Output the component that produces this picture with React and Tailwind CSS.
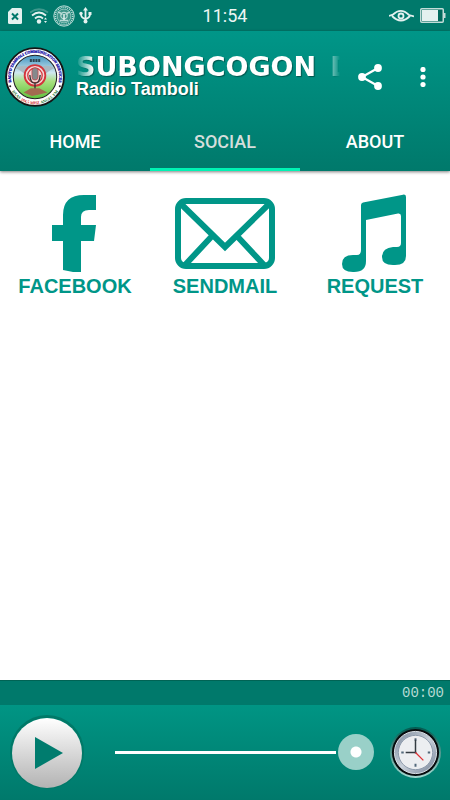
import React from 'react';

const PETAL = '#009688';

function Seal() {
  return (
    <svg viewBox="0 0 60 60" className="h-full w-full" role="img" aria-label="Radio Tamboli seal">
      <defs>
        <path id="seal-top" d="M9.500 41.500 A23.500 23.500 0 1 1 50.500 41.500" />
        <path id="seal-bottom" d="M5.500 40 A26.500 26.500 0 0 0 54.500 40" />
        <linearGradient id="seal-sky" x1="0" y1="0" x2="0" y2="1">
          <stop offset="0" stopColor="#3f93c0" />
          <stop offset=".4" stopColor="#cfe8f0" />
          <stop offset=".6" stopColor="#a8e080" />
          <stop offset="1" stopColor="#5fc23c" />
        </linearGradient>
      </defs>
      <circle cx="30" cy="30" r="28" fill="#fff" stroke="#151515" strokeWidth="1.800" />
      <circle cx="30" cy="30" r="21" fill="url(#seal-sky)" stroke="#222" strokeWidth="1" />
      <text fontFamily="Liberation Serif, serif" fontWeight="700" fontSize="3.6" fill="#2015a8" stroke="#2015a8" strokeWidth=".3">
        <textPath href="#seal-top" startOffset="50%" textAnchor="middle">RADYO TAMBOLI COMMUNICATION SERVICES</textPath>
      </text>
      <text fontFamily="Liberation Serif, serif" fontWeight="700" fontSize="4" fill="#16752c">
        <textPath href="#seal-bottom" startOffset="50%" textAnchor="middle">
          DXAS <tspan fill="#d11c24">104.5 MHZ</tspan> ANGEL FM
        </textPath>
      </text>
      <circle cx="6" cy="39" r="1" fill="#222" />
      <circle cx="54" cy="39" r="1" fill="#222" />
      <path d="M11 21 Q21 17 28 22 L25 34 Q21 26 11 21 M49 21 Q39 17 32 22 L35 34 Q39 26 49 21" fill="#aab9c2" />
      <path d="M25 14 H35" stroke="#2c4652" strokeWidth="3" strokeDasharray="2 .700" />
      <circle cx="30" cy="28.500" r="10" fill="#f3d9d8" stroke="#d3343b" strokeWidth="1.800" />
      <circle cx="30" cy="28.500" r="7" fill="none" stroke="#d3343b" strokeWidth="1.200" />
      <rect x="27" y="21" width="6" height="12" rx="3" fill="#85898c" stroke="#d3343b" strokeWidth=".6" />
      <path d="M25 28 Q25.500 36 30 36 Q34.500 36 35 28 M30 36 V43" fill="none" stroke="#333" strokeWidth="1.300" />
      <path d="M19 45 L26 41 L34 41 L42 45 L34 47 L27 48.500 Z" fill="#a36b50" />
    </svg>
  );
}

function MonoSeal() {
  return (
    <svg viewBox="0 0 22 22" className="size-[22px]" aria-hidden="true" fill="none" stroke="#b9dbd6">
      <circle cx="11" cy="11" r="10.200" />
      <circle cx="11" cy="11" r="8.700" strokeWidth="1.600" strokeDasharray="1.200 .800" />
      <circle cx="11" cy="11" r="7" fill="#3d9589" strokeWidth=".8" />
      <path d="M5 7.500 Q8 7 9 10 M17 7.500 Q14 7 13 10 M7 15.500 H15" strokeWidth="1.400" />
      <circle cx="11" cy="10.500" r="3.200" strokeWidth="1.200" />
      <path d="M11 9 V15" stroke="#e4f1ef" strokeWidth="1.500" />
    </svg>
  );
}

function StatusBar() {
  return (
    <div className="relative flex h-[31px] items-center justify-between bg-[#00796b] px-2">
      <div className="flex items-center gap-2">
        <svg viewBox="0 0 14 16" className="h-4 w-3.5" aria-hidden="true">
          <path d="M4 0 H12.500 Q14 0 14 1.500 V14.500 Q14 16 12.500 16 H1.500 Q0 16 0 14.500 V4 Z" fill="#e4f1ef" />
          <path d="M4 5.500 L10 11.500 M10 5.500 L4 11.500" stroke="#00796b" strokeWidth="2" />
        </svg>
        <div className="flex items-center gap-1">
          <svg viewBox="0 0 19 16" className="h-4 w-[19px]" aria-hidden="true" fill="none" strokeWidth="1.800">
            <path d="M0 4.500 Q9 -2 18 4.500" stroke="#3f988d" />
            <path d="M2 7.500 Q9 1.500 16 7.500 M5 10.500 Q9 7 13 10.500" stroke="#e4f1ef" />
            <circle cx="9" cy="13.500" r="2.200" fill="#e4f1ef" />
            <path d="M14 11.500 L15.500 9.500 L17 11.500 Z M14 13 H17 L15.500 15 Z" fill="#e4f1ef" />
          </svg>
          <MonoSeal />
          <svg viewBox="0 0 13 17" className="h-[17px] w-[13px]" aria-hidden="true">
            <path d="M6.500 14 V2 M6.500 12 Q2 11 2 7 M6.500 12 Q11 11 11 7" fill="none" stroke="#e4f1ef" strokeWidth="1.800" />
            <path d="M6.500 0 L9 3.500 H4 Z M9.500 5 H12.500 V8 H9.500 Z" fill="#e4f1ef" />
            <circle cx="2" cy="6.500" r="1.700" fill="#e4f1ef" />
            <circle cx="6.500" cy="14.500" r="2" fill="#e4f1ef" />
          </svg>
        </div>
      </div>
      <time className="absolute inset-x-0 text-center text-lg leading-8 text-[#edf6f4]">11:54</time>
      <div className="-mr-1 flex items-center gap-1.5">
        <svg viewBox="0 0 25 14" className="h-3.5 w-[25px]" aria-hidden="true" fill="none" stroke="#e4f1ef">
          <path d="M0 7 L4 5.500 Q12 -2 20 6 L25 7.500 M3 7 Q12 16 21 7" strokeWidth="1.800" />
          <circle cx="12" cy="7" r="2.500" strokeWidth="1.800" />
        </svg>
        <svg viewBox="0 0 26 15" className="h-[15px] w-[26px]" aria-hidden="true">
          <rect x=".75" y=".75" width="22.500" height="13.500" rx="1" fill="#00695c" stroke="#c3ddd9" strokeWidth="1.500" />
          <rect x="2" y="2" width="16" height="11" fill="#e4f1ef" />
          <path d="M24 5 H25.500 V10 H24 Z" fill="#c3ddd9" />
        </svg>
      </div>
    </div>
  );
}

function Header() {
  return (
    <header className="relative bg-linear-to-b from-[#009688] to-[#00796b] shadow-[0_1px_3px_rgba(0,0,0,0.5)]">
      <div className="flex h-[91px] items-center pl-1">
        <div className="size-[62px] shrink-0"><Seal /></div>
        <div className="ml-2.5 min-w-0 flex-1 text-white [text-shadow:1px_1px_1px_rgba(0,0,0,0.4)]">
          <h1 className="flex gap-3.5 overflow-hidden font-['DejaVu_Sans'] text-[27px] leading-6 font-bold whitespace-nowrap [mask-image:linear-gradient(to_right,transparent,black_18px,black_calc(100%-18px),transparent)]">
            <span>SUBONGCOGON</span>
            <span aria-hidden="true">D</span>
          </h1>
          <p className="font-['Liberation_Sans'] text-lg leading-5 font-bold">Radio Tamboli</p>
        </div>
        <button type="button" aria-label="Share" className="ml-4 p-0.5">
          <svg viewBox="0 0 24 26" className="h-[26px] w-6" fill="#fff">
            <path d="M20 4 L4 13 L20 22" fill="none" stroke="#fff" strokeWidth="2.200" />
            <circle cx="20" cy="4" r="3.900" /><circle cx="4" cy="13" r="3.900" /><circle cx="20" cy="22" r="3.900" />
          </svg>
        </button>
        <button type="button" aria-label="More options" className="mr-4 ml-7 p-2">
          <svg viewBox="0 0 6 20" className="h-5 w-1.5" fill="#fff">
            <circle cx="3" cy="2.500" r="2.600" /><circle cx="3" cy="10" r="2.600" /><circle cx="3" cy="17.500" r="2.600" />
          </svg>
        </button>
      </div>
      <nav role="tablist" className="grid h-[49px] grid-cols-3 text-lg font-medium text-white">
        <button type="button" role="tab" aria-selected="false" className="pb-2.5">HOME</button>
        <button type="button" role="tab" aria-selected="true" className="border-b-3 border-[#00f2b4] pb-[7px] text-[#d5dedc]">SOCIAL</button>
        <button type="button" role="tab" aria-selected="false" className="pb-2.5">ABOUT</button>
      </nav>
    </header>
  );
}

const links = [
  {
    label: 'FACEBOOK',
    art: <path d="M44 1 V16 H37 Q29 16 29 23 V31 H44 L42 47 H29 V78 H21 L11 76 V47 H0 V31 H11 V21 Q11 1 32 1 Z" fill={PETAL} />,
    box: '0 0 46 78',
    size: 'h-[78px] w-[46px]',
  },
  {
    label: 'SENDMAIL',
    art: (
      <g fill="none" stroke={PETAL} strokeWidth="6">
        <rect x="3" y="7" width="94" height="65" rx="8" />
        <path d="M6 10 L50 53 L94 10 M10 71 L38 41 M89 71 L61 41" />
      </g>
    ),
    box: '0 0 100 78',
    size: 'h-[78px] w-[100px]',
  },
  {
    label: 'REQUEST',
    art: <path d="M19 11 Q19 9 21 8.500 L61 .7 Q64 .2 64 3 V62 Q64 71 53 71 H51 Q40 71 40 63 Q40 54 51 53 H55 Q59 53 59 49 V22 Q59 19 56 19.500 L24 26 V67 Q24 78 12 78 H11 Q0 78 0 70 Q0 61 11 61 H15 Q19 61 19 56 Z" fill={PETAL} />,
    box: '0 0 66 78',
    size: 'h-[78px] w-[66px]',
  },
];

function Player() {
  return (
    <footer>
      <div className="flex h-[25px] items-center justify-end border-t border-[#006354] bg-[#00796b] pr-1.5">
        <time className="font-['Liberation_Mono'] text-sm text-[#b5d9d3]">00:00</time>
      </div>
      <div className="flex h-[95px] items-center bg-linear-to-b from-[#009584] to-[#00796b] pl-3">
        <button type="button" aria-label="Play" className="flex size-[70px] shrink-0 items-center justify-center rounded-full bg-linear-to-b from-white to-[#b3b3b3] shadow-[0_-1px_0_2px_#007968]">
          <svg viewBox="0 0 28 32" className="ml-1 h-8 w-7"><path d="M0 0 L28 16 L0 32 Z" fill="#007c6e" /></svg>
        </button>
        <input
          type="range"
          aria-label="Volume"
          min="0"
          max="100"
          defaultValue="100"
          className="ml-[33px] h-9 min-w-0 flex-1 appearance-none bg-transparent [&::-webkit-slider-runnable-track]:h-[3px] [&::-webkit-slider-runnable-track]:bg-[linear-gradient(to_right,white_calc(100%-38px),transparent_calc(100%-38px))] [&::-webkit-slider-thumb]:-mt-[17px] [&::-webkit-slider-thumb]:size-9 [&::-webkit-slider-thumb]:appearance-none [&::-webkit-slider-thumb]:rounded-full [&::-webkit-slider-thumb]:bg-[radial-gradient(circle,white_5px,#99d0c8_6px)]"
        />
        <button type="button" aria-label="Sleep timer" className="mr-2 ml-[15px] shrink-0">
          <svg viewBox="0 0 54 54" className="size-[53px]">
            <defs>
              <linearGradient id="rim" x1="0" y1="0" x2="0" y2="1"><stop offset="0" stopColor="#00584e" /><stop offset="1" stopColor="#a5d9d1" /></linearGradient>
              <linearGradient id="steel" x1="0" y1="0" x2="1" y2="1"><stop offset="0" stopColor="#78879a" /><stop offset=".5" stopColor="#c8d0da" /><stop offset="1" stopColor="#748296" /></linearGradient>
            </defs>
            <circle cx="27" cy="27" r="26" fill="url(#rim)" />
            <circle cx="27" cy="27" r="24" fill="#080c0e" />
            <circle cx="27" cy="27" r="21.500" fill="url(#steel)" stroke="#dbe1e8" />
            <circle cx="27" cy="27" r="17.500" fill="#eceef1" stroke="#8d9aab" />
            <path d="M27 12.500 V15 M27 38.500 V41.500 M12.500 27 H15 M39.500 27 H42" stroke="#53697b" strokeWidth="2" />
            <path d="M27 28 V14 M28 27 H17" stroke="#333b42" strokeWidth="1.500" />
            <path d="M27 27 L35 35" stroke="#df3034" strokeWidth="1.300" />
          </svg>
        </button>
      </div>
    </footer>
  );
}

export default function App() {
  return (
    <div className="flex min-h-screen flex-col bg-white font-[Roboto,sans-serif]">
      <StatusBar />
      <Header />
      <main className="grid flex-1 grid-cols-3 content-start pt-[23px]">
        {links.map((item) => (
          <button key={item.label} type="button" className="flex flex-col items-center gap-0.5 font-['Liberation_Sans'] text-xl leading-6 font-bold text-[#009688]">
            <svg viewBox={item.box} className={item.size} aria-hidden="true">{item.art}</svg>
            <span>{item.label}</span>
          </button>
        ))}
      </main>
      <Player />
    </div>
  );
}
